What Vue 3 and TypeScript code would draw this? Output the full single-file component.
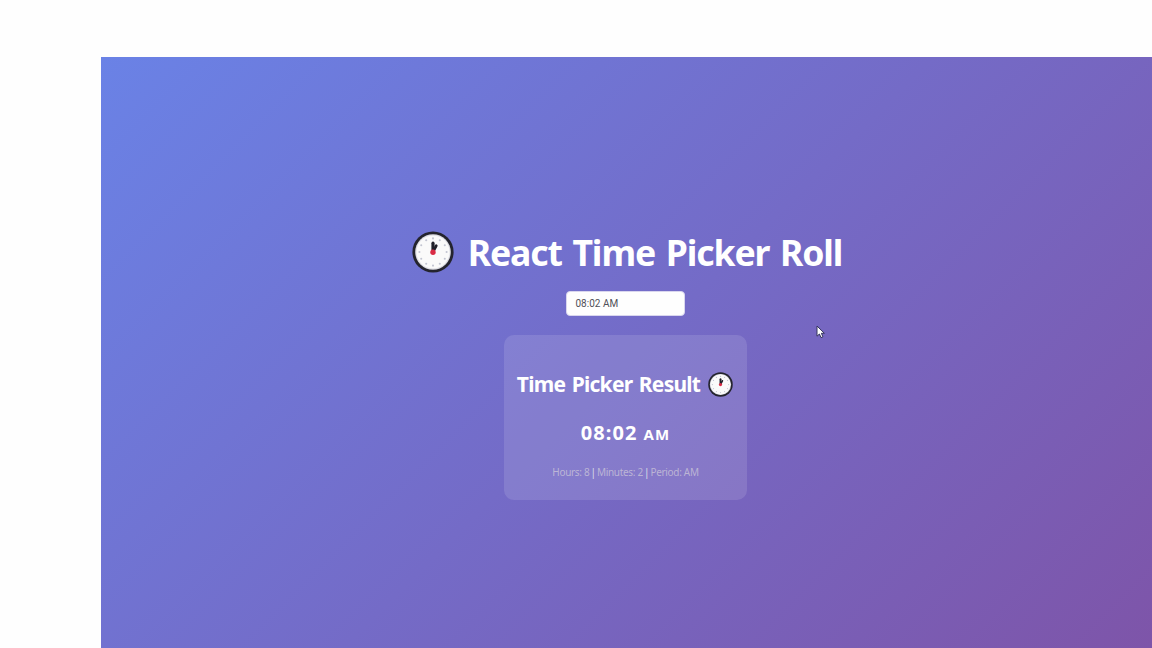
<script setup lang="ts">
import { computed, ref } from 'vue'

interface TimeValue {
  hours: number
  minutes: number
  period: 'AM' | 'PM'
}

const time = ref<TimeValue>({ hours: 8, minutes: 2, period: 'AM' })
const pad = (n: number): string => String(n).padStart(2, '0')
const clock = computed(() => `${pad(time.value.hours)}:${pad(time.value.minutes)}`)

const ticks: { x: number; y: number }[] = Array.from({ length: 12 }, (_, i) => ({
  x: 21 + 13.6 * Math.sin((i * Math.PI) / 6),
  y: 21 - 13.6 * Math.cos((i * Math.PI) / 6),
}))
</script>

<template>
  <div class="canvas">
    <svg class="defs" width="0" height="0" aria-hidden="true">
      <symbol id="clock-face" viewBox="0 0 42 42">
        <circle cx="21" cy="21" r="20.6" fill="#24242e" />
        <circle cx="21" cy="21" r="17.8" fill="#dcdce2" />
        <circle cx="21" cy="21" r="16.6" fill="#fafafa" />
        <circle v-for="(t, i) in ticks" :key="i" :cx="t.x" :cy="t.y" r="1.05" fill="#c3c5d2" />
        <path d="M21 20V12.2" stroke="#20202a" stroke-width="3.2" stroke-linecap="round" />
        <path d="M21.4 20L24.2 14.8" stroke="#20202a" stroke-width="2.8" stroke-linecap="round" />
        <circle cx="21" cy="21.2" r="2.7" fill="#d92b45" />
      </symbol>
    </svg>
    <main class="page">
      <h1 class="title">
        <svg class="title-icon"><use href="#clock-face" /></svg>
        <span class="title-text">React Time Picker Roll</span>
      </h1>
      <div class="field">{{ clock }} {{ time.period }}</div>
      <section class="card">
        <h2 class="card-title">
          <span class="card-title-text">Time Picker Result</span>
          <svg class="card-icon"><use href="#clock-face" /></svg>
        </h2>
        <p class="value"><span class="value-time">{{ clock }}</span><span class="period">{{ time.period }}</span></p>
        <p class="details">
          Hours: {{ time.hours }} <span class="bar">|</span> Minutes: {{ time.minutes }} <span class="bar">|</span> Period: {{ time.period }}
        </p>
      </section>
    </main>
    <svg class="cursor" viewBox="0 0 10 14">
      <path d="M1 1V11.2L3.4 9L5 12.6L6.9 11.8L5.4 8.3H8.4Z" fill="#fff" stroke="#34345c" stroke-width="1" stroke-linejoin="round" />
    </svg>
  </div>
</template>

<style>
body {
  overflow: hidden;
}
</style>

<style scoped>
.canvas {
  position: relative;
  box-sizing: border-box;
  width: 1152px;
  height: 648px;
  padding: 57px 0 0 101px;
  overflow: hidden;
  background: #fefefe;
  font-family: "Noto Sans", "Open Sans", sans-serif;
}
.defs {
  position: absolute;
}
.page {
  box-sizing: border-box;
  display: flex;
  flex-direction: column;
  align-items: center;
  width: 1051px;
  height: 612px;
  padding: 170px 2px 0 0;
  color: #fff;
  background: linear-gradient(135deg, #6a82e6 0%, #7e54a8 100%);
}
.title {
  display: flex;
  align-items: center;
  gap: 14px;
  height: 50px;
  margin: 0;
  font-size: 35.6px;
  line-height: 50px;
  white-space: nowrap;
}
.title-icon {
  width: 42px;
  height: 42px;
}
.title-text {
  margin-right: -3px;
  letter-spacing: -1.1px;
  word-spacing: 2.4px;
}
.field {
  box-sizing: border-box;
  width: 119px;
  height: 25px;
  margin-top: 14px;
  padding-left: 8.5px;
  border: 1px solid #d9d6ee;
  border-radius: 4px;
  background: #fefefe;
  color: #505058;
  font-family: Roboto, sans-serif;
  font-size: 10px;
  line-height: 23px;
}
.card {
  box-sizing: border-box;
  width: 243px;
  height: 165px;
  margin-top: 19px;
  padding-top: 34px;
  border-radius: 10px;
  background: rgba(255, 255, 255, 0.12);
}
.card-title {
  display: flex;
  align-items: center;
  justify-content: center;
  gap: 8px;
  height: 30px;
  margin: 0;
  padding-right: 1px;
  font-size: 21px;
  line-height: 30px;
  white-space: nowrap;
}
.card-title-text {
  letter-spacing: -0.75px;
  word-spacing: 1.8px;
}
.card-icon {
  width: 25px;
  height: 25px;
}
.value {
  display: flex;
  align-items: baseline;
  justify-content: center;
  gap: 6px;
  height: 28px;
  margin: 20px 0 0;
  font-size: 20px;
  font-weight: 700;
  line-height: 28px;
  letter-spacing: 1.1px;
}
.period {
  font-size: 15px;
}
.details {
  height: 14px;
  margin: 18px 0 0;
  color: rgba(210, 205, 218, 0.72);
  font-size: 10px;
  line-height: 14px;
  letter-spacing: -0.3px;
  text-align: center;
  white-space: nowrap;
}
.bar {
  margin: 0 -1.2px;
  color: rgba(232, 230, 238, 0.9);
}
.cursor {
  position: absolute;
  top: 325px;
  left: 816px;
  width: 10px;
  height: 14px;
}
</style>
